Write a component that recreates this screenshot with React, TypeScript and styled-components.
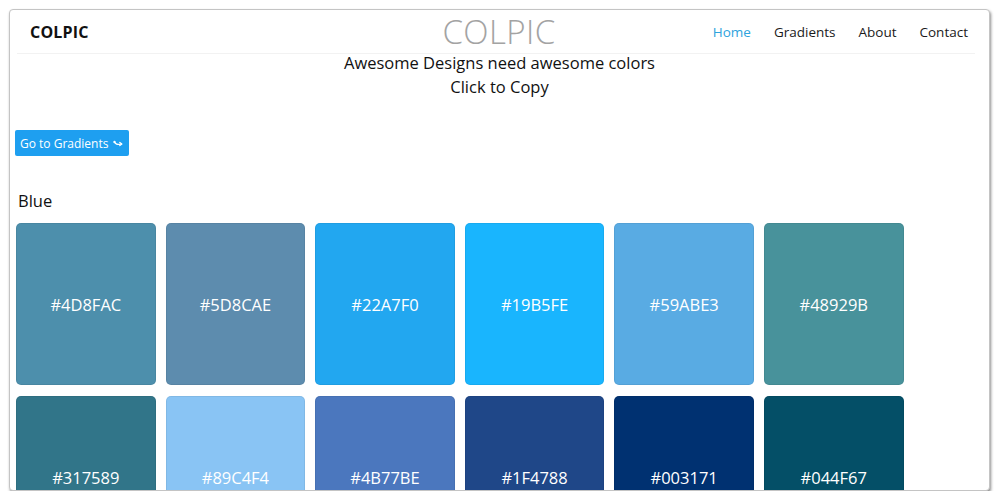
import React from 'react'
import styled, { createGlobalStyle } from 'styled-components'

const GlobalStyle = createGlobalStyle`
* { box-sizing: border-box; }
html, body {
  margin: 0;
  padding: 0;
  background: #ffffff;
  font-family: "Open Sans", "Noto Sans", sans-serif;
  color: #111;
}
`

const Frame = styled.div`
margin: 9px 10px 0 9px;
height: 482px;
border: 1px solid #c4c4c4;
border-radius: 4px;
box-shadow: 1px 2px 3px rgba(0, 0, 0, 0.45);
overflow: hidden;
background: #fff;
`

const NavBar = styled.nav`
height: 44px;
margin: 0 14px 0 7px;
padding: 0 7px 0 13px;
display: grid;
grid-template-columns: 1fr auto 1fr;
align-items: center;
border-bottom: 1px solid #f2f2f2;
`

const Brand = styled.div`
font-size: 16px;
font-weight: 700;
letter-spacing: 0.2px;
`

const BigTitle = styled.div`
font-size: 33px;
font-weight: 300;
color: #a3a3a3;
line-height: 44px;
letter-spacing: 0.4px;
`

const NavLinks = styled.ul`
list-style: none;
margin: 0;
padding: 0;
display: flex;
justify-content: flex-end;
gap: 23px;
`

const NavLink = styled.li<{ $active?: boolean }>`
font-size: 13.5px;
color: ${p => (p.$active ? '#2ea3dd' : '#1a1a1a')};
cursor: pointer;
`

const Header = styled.header`
text-align: center;
font-size: 16.5px;
line-height: 24px;
margin-top: -3px;
`

const Content = styled.main`
padding: 31px 0 0 5px;
`

const GoButton = styled.button`
display: inline-flex;
align-items: center;
gap: 5px;
height: 26px;
padding: 0 6px 0 5px;
border: none;
border-radius: 2px;
background: #1e9ff0;
color: #fff;
font-family: inherit;
font-size: 12px;
cursor: pointer;
`

const GroupTitle = styled.h2`
margin: 33px 0 11px 3px;
font-size: 16.5px;
font-weight: 400;
`

const SwatchGrid = styled.div`
display: grid;
grid-template-columns: repeat(6, 139.6px);
column-gap: 10px;
row-gap: 11px;
padding-left: 1px;
`

const Swatch = styled.div<{ $color: string }>`
height: 162px;
border-radius: 5px;
background: ${p => p.$color};
box-shadow: inset 0 0 0 1px rgba(0, 0, 0, 0.06);
display: flex;
align-items: center;
justify-content: center;
color: #fff;
font-size: 16.5px;
cursor: pointer;
`

const colors = [
  '#4D8FAC', '#5D8CAE', '#22A7F0', '#19B5FE', '#59ABE3', '#48929B',
  '#317589', '#89C4F4', '#4B77BE', '#1F4788', '#003171', '#044F67',
]

const ArrowIcon = () => (
  <svg width="10" height="8" viewBox="0 0 10 8" fill="none">
    <circle cx="1.5" cy="3" r="1.2" fill="#fff" />
    <path d="M1.5 3 C3 6, 5 5.5, 8.5 5" stroke="#fff" strokeWidth="1.4" strokeLinecap="round" />
    <path d="M6.8 3.4 L8.8 5 L6.8 6.6" stroke="#fff" strokeWidth="1.3" strokeLinecap="round" strokeLinejoin="round" />
  </svg>
)

export default function App() {
  return (
    <>
      <GlobalStyle />
      <Frame>
        <NavBar>
          <Brand>COLPIC</Brand>
          <BigTitle>COLPIC</BigTitle>
          <NavLinks>
            <NavLink $active>Home</NavLink>
            <NavLink>Gradients</NavLink>
            <NavLink>About</NavLink>
            <NavLink>Contact</NavLink>
          </NavLinks>
        </NavBar>
        <Header>
          <div>Awesome Designs need awesome colors</div>
          <div>Click to Copy</div>
        </Header>
        <Content>
          <GoButton>
            Go to Gradients <ArrowIcon />
          </GoButton>
          <GroupTitle>Blue</GroupTitle>
          <SwatchGrid>
            {colors.map(c => (
              <Swatch key={c} $color={c}>{c}</Swatch>
            ))}
          </SwatchGrid>
        </Content>
      </Frame>
    </>
  )
}
